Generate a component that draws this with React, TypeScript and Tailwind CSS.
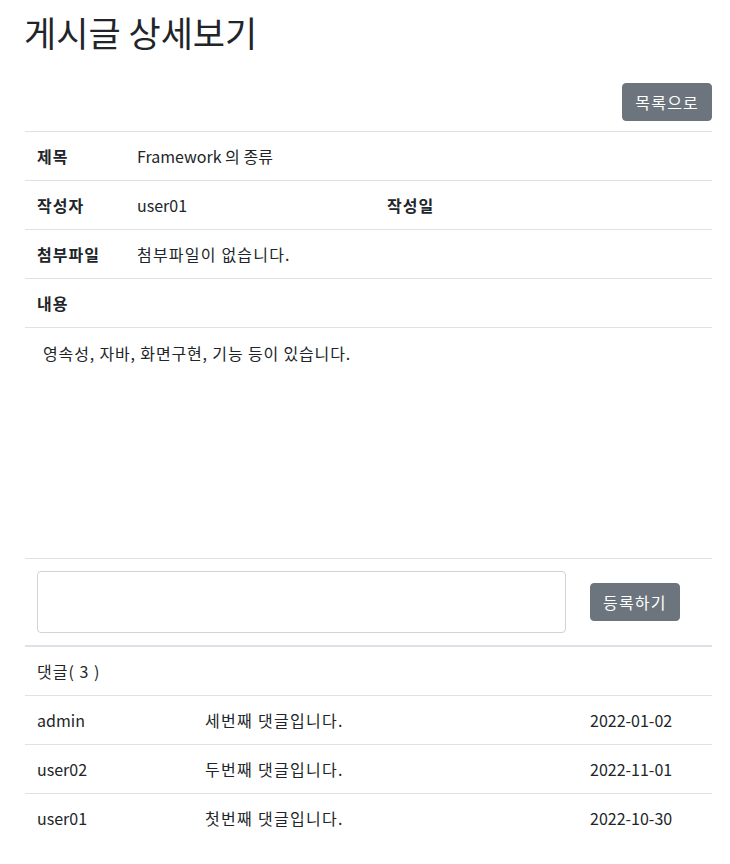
const comments = [
  { id: 3, writer: "admin", content: "세번째 댓글입니다.", date: "2022-01-02" },
  { id: 2, writer: "user02", content: "두번째 댓글입니다.", date: "2022-11-01" },
  { id: 1, writer: "user01", content: "첫번째 댓글입니다.", date: "2022-10-30" },
];

function InfoRow({ label, children }: { label: string; children?: React.ReactNode }) {
  return (
    <div className="flex border-b border-[#dee2e6]">
      <div className="w-[100px] shrink-0 px-3 py-3 font-bold tracking-[1px]">{label}</div>
      {children}
    </div>
  );
}

export default function App() {
  return (
    <div className="min-h-screen bg-white font-['Noto_Sans_CJK_KR',sans-serif] text-base leading-6 text-[#212529]">
      <div className="ml-[25px] w-[687px] pb-6">
        <h1 className="mt-[10px] -ml-[1px] text-[35px] font-normal leading-[43px]">게시글 상세보기</h1>

        <div className="mt-[30px] flex justify-end">
          <button className="rounded-[4px] border border-[#6c757d] bg-[#6c757d] px-3 py-[6px] tracking-[1.2px] text-white">
            목록으로
          </button>
        </div>

        <div className="mt-[10px] border-t border-[#dee2e6]">
          <InfoRow label="제목">
            <div className="px-3 py-3">Framework 의 종류</div>
          </InfoRow>
          <InfoRow label="작성자">
            <div className="w-[250px] shrink-0 px-3 py-3">user01</div>
            <div className="px-3 py-3 font-bold tracking-[1px]">작성일</div>
          </InfoRow>
          <InfoRow label="첨부파일">
            <div className="px-3 py-3 tracking-[1.2px]">첨부파일이 없습니다.</div>
          </InfoRow>
          <InfoRow label="내용" />
          <div className="h-[231px] border-b border-[#dee2e6] pl-[18px] pt-[13px] tracking-[0.85px]">
            영속성, 자바, 화면구현, 기능 등이 있습니다.
          </div>
        </div>

        <div className="flex items-center border-b-2 border-[#dee2e6]">
          <div className="w-[553px] shrink-0 px-3 py-3">
            <textarea className="block h-[62px] w-full resize-none rounded-[4px] border border-[#ced4da] px-3 py-[6px] outline-none" />
          </div>
          <div className="px-3">
            <button className="rounded-[4px] border border-[#6c757d] bg-[#6c757d] px-3 py-[6px] tracking-[1.2px] text-white">
              등록하기
            </button>
          </div>
        </div>

        <div className="border-b border-[#dee2e6] px-3 py-3 tracking-[1px]">댓글( 3 )</div>

        {comments.map((c, i) => (
          <div
            key={c.id}
            className={`flex ${i < comments.length - 1 ? "border-b border-[#dee2e6]" : ""}`}
          >
            <div className="w-[168px] shrink-0 px-3 py-3">{c.writer}</div>
            <div className="w-[385px] shrink-0 px-3 py-3 tracking-[1.3px]">{c.content}</div>
            <div className="px-3 py-3">{c.date}</div>
          </div>
        ))}
      </div>
    </div>
  );
}
